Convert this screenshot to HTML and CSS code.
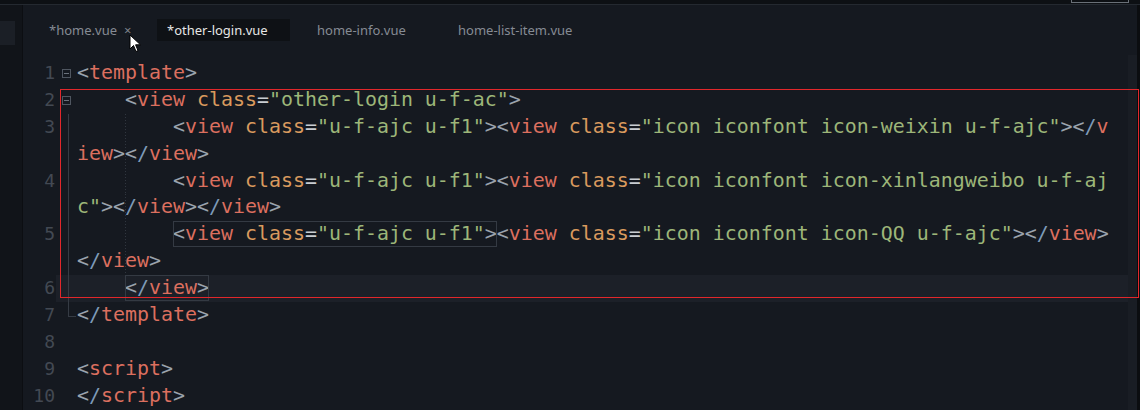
FILE: index.html
```html
<!DOCTYPE html>
<html>
<head>
<meta charset="utf-8">
<link rel="stylesheet" href="styles.css">
</head>
<body>
<div class="topbar"><div class="topbox"></div></div>
<div class="app">
  <div class="side"><div class="side-block"></div></div>
  <div class="main">
    <div class="tabs">
      <div class="tab">*home.vue<span class="close">×</span></div>
      <div class="tab active">*other-login.vue</div>
      <div class="tab t3">home-info.vue</div>
      <div class="tab t4">home-list-item.vue</div>
      <svg class="pointer" width="14" height="20" viewBox="0 0 14 20"><path d="M1 1 L1 15 L4.5 11.5 L7 17.5 L9 16.6 L6.6 10.8 L11.5 10.8 Z" fill="#fff" stroke="#000" stroke-width="1"/></svg>
    </div>
    <div class="editor">
      <div class="row"><span class="ln">1</span><span class="fold"><i class="fbox"></i></span><span class="code"><b class="p">&lt;</b><b class="t">template</b><b class="p">&gt;</b></span></div>
      <div class="row"><span class="ln">2</span><span class="fold"><i class="fbox"></i></span><span class="code">    <b class="p">&lt;</b><b class="t">view</b> <b class="a">class</b><b class="e">=</b><b class="s">"other-login u-f-ac"</b><b class="p">&gt;</b></span></div>
      <div class="row"><span class="ln">3</span><span class="fold vline"></span><span class="code guide">        <b class="p">&lt;</b><b class="t">view</b> <b class="a">class</b><b class="e">=</b><b class="s">"u-f-ajc u-f1"</b><b class="p">&gt;&lt;</b><b class="t">view</b> <b class="a">class</b><b class="e">=</b><b class="s">"icon iconfont icon-weixin u-f-ajc"</b><b class="p">&gt;&lt;</b><b class="sl">/</b><b class="t">v</b></span></div>
      <div class="row"><span class="ln"></span><span class="fold vline"></span><span class="code guide"><b class="t">iew</b><b class="p">&gt;&lt;</b><b class="sl">/</b><b class="t">view</b><b class="p">&gt;</b></span></div>
      <div class="row"><span class="ln">4</span><span class="fold vline"></span><span class="code guide">        <b class="p">&lt;</b><b class="t">view</b> <b class="a">class</b><b class="e">=</b><b class="s">"u-f-ajc u-f1"</b><b class="p">&gt;&lt;</b><b class="t">view</b> <b class="a">class</b><b class="e">=</b><b class="s">"icon iconfont icon-xinlangweibo u-f-aj</b></span></div>
      <div class="row"><span class="ln"></span><span class="fold vline"></span><span class="code guide"><b class="s">c"</b><b class="p">&gt;&lt;</b><b class="sl">/</b><b class="t">view</b><b class="p">&gt;&lt;</b><b class="sl">/</b><b class="t">view</b><b class="p">&gt;</b></span></div>
      <div class="row"><span class="ln">5</span><span class="fold vline"></span><span class="code guide">        <span class="match"><b class="p">&lt;</b><b class="t">view</b> <b class="a">class</b><b class="e">=</b><b class="s">"u-f-ajc u-f1"</b><b class="p">&gt;</b></span><b class="p">&lt;</b><b class="t">view</b> <b class="a">class</b><b class="e">=</b><b class="s">"icon iconfont icon-QQ u-f-ajc"</b><b class="p">&gt;&lt;</b><b class="sl">/</b><b class="t">view</b><b class="p">&gt;</b></span></div>
      <div class="row"><span class="ln"></span><span class="fold vline"></span><span class="code guide"><b class="p">&lt;</b><b class="sl">/</b><b class="t">view</b><b class="p">&gt;</b></span></div>
      <div class="row current"><span class="ln">6</span><span class="fold vline"></span><span class="code">    <span class="match"><b class="p">&lt;</b><b class="sl">/</b><b class="t">view</b><b class="p">&gt;</b></span></span></div>
      <div class="row"><span class="ln">7</span><span class="fold fend"></span><span class="code"><b class="p">&lt;</b><b class="sl">/</b><b class="t">template</b><b class="p">&gt;</b></span></div>
      <div class="row"><span class="ln">8</span><span class="fold"></span><span class="code"></span></div>
      <div class="row"><span class="ln">9</span><span class="fold"></span><span class="code"><b class="p">&lt;</b><b class="t">script</b><b class="p">&gt;</b></span></div>
      <div class="row"><span class="ln">10</span><span class="fold"></span><span class="code"><b class="p">&lt;</b><b class="sl">/</b><b class="t">script</b><b class="p">&gt;</b></span></div>
      <div class="redbox"></div>
    </div>
  </div>
  <div class="scroll"></div>
  <div class="edge"></div>
</div>
</body>
</html>
```
FILE: styles.css
```css
html, body {
  margin: 0;
  padding: 0;
}
body {
  width: 1140px;
  height: 410px;
  overflow: hidden;
  background: #151920;
  font-family: "Noto Sans", "Open Sans", sans-serif;
}
.topbar {
  height: 4px;
  background: #0d1014;
  border-bottom: 1px solid #242930;
  position: relative;
}
.topbox {
  position: absolute;
  left: 1071px;
  top: -2px;
  width: 56px;
  height: 3px;
  border: 1px solid #6a7078;
}
.app {
  display: flex;
  height: 405px;
}
.side {
  width: 22px;
  background: #111419;
  border-right: 1px solid #0c0e12;
  padding-top: 16px;
  box-sizing: content-box;
}
.side-block {
  width: 15px;
  height: 24px;
  background: #1b1f26;
}
.main {
  flex: 1;
  display: flex;
  flex-direction: column;
}
.tabs {
  height: 55px;
  display: flex;
  align-items: flex-start;
  padding-top: 14px;
  box-sizing: border-box;
  position: relative;
}
.tab {
  height: 22px;
  line-height: 22px;
  font-size: 13px;
  color: #868b94;
  white-space: nowrap;
}
.tab:first-child {
  margin-left: 26px;
  width: 108px;
}
.close {
  margin-left: 7px;
  font-size: 13px;
  color: #7d828b;
}
.tab.active {
  background: #0e1115;
  color: #e6e6e6;
  width: 133px;
  padding-left: 10px;
  box-sizing: border-box;
}
.tab.t3 {
  margin-left: 27px;
  width: 141px;
}
.pointer {
  position: absolute;
  left: 106px;
  top: 29px;
}
.editor {
  position: relative;
  font-family: "DejaVu Sans Mono", "Liberation Mono", monospace;
}
.row {
  display: flex;
  height: 26.9px;
  line-height: 26.9px;
}
.row.current .fold,
.row.current .code {
  background: #1c2028;
}
.ln {
  width: 33px;
  text-align: right;
  color: #434953;
  font-size: 18px;
  flex: none;
  padding-right: 1px;
  box-sizing: border-box;
}
.fold {
  width: 21px;
  flex: none;
  position: relative;
}
.fbox {
  position: absolute;
  left: 6px;
  top: 9px;
  width: 9px;
  height: 9px;
  border: 1px solid #4f5660;
  box-sizing: border-box;
}
.fbox::after {
  content: "";
  position: absolute;
  left: 1px;
  right: 1px;
  top: 3px;
  height: 1px;
  background: #6a717b;
}
.vline::before {
  content: "";
  position: absolute;
  left: 12px;
  top: 0;
  bottom: 0;
  width: 1px;
  background: #353b44;
}
.fend::before {
  content: "";
  position: absolute;
  left: 12px;
  top: 0;
  height: 14px;
  width: 1px;
  background: #353b44;
}
.fend::after {
  content: "";
  position: absolute;
  left: 12px;
  top: 14px;
  width: 8px;
  height: 1px;
  background: #353b44;
}
.code {
  flex: 1;
  white-space: pre;
  font-size: 19.93px;
  color: #c9cdd2;
}
.guide {
  background-image: repeating-linear-gradient(to bottom, #30363f 0 1px, transparent 1px 3px);
  background-size: 1px 100%;
  background-position: 48px 0;
  background-repeat: no-repeat;
}
.code b {
  font-weight: normal;
}
.p { color: #9aa3ad; }
.t { color: #dc6f5f; }
.a { color: #d99a5e; }
.e { color: #c9cdd2; }
.s { color: #9db679; }
.sl { color: #7e9bb8; }
.match {
  display: inline-block;
  height: 26px;
  line-height: 26px;
  outline: 1px solid #343a43;
  outline-offset: -1px;
  vertical-align: top;
}
.redbox {
  position: absolute;
  left: 37px;
  top: 29px;
  width: 1079px;
  height: 209px;
  border: 1px solid #e2272b;
  box-sizing: border-box;
  pointer-events: none;
}
.scroll {
  width: 9px;
  background: #191d24;
  margin-top: 50px;
}
.edge {
  width: 3px;
  background: #0b0d10;
}
```
